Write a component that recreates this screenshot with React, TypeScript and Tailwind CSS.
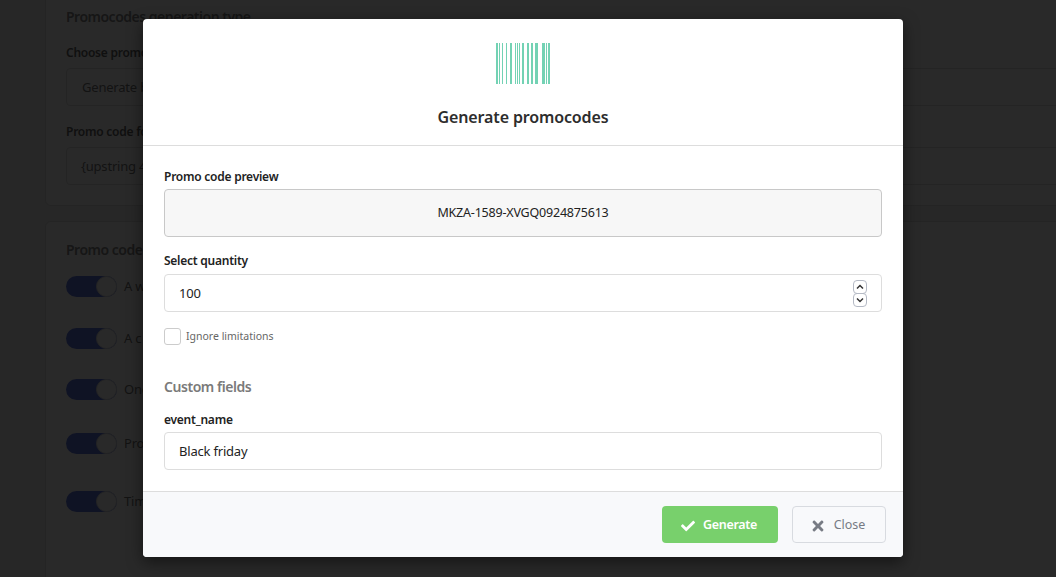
import { FaCheck, FaTimes } from "react-icons/fa";

const font = "font-['Noto_Sans',sans-serif]";

// start and end of each bar in the barcode logo
const bars = [
  [0, 2], [3, 4], [6, 7], [10, 11], [14, 16], [19, 20], [21, 22], [23, 24], [26, 28],
  [31, 33], [35, 37], [39, 42], [46, 49], [50, 51], [52, 54],
];

const toggles = [
  { label: "A w", cls: "mt-[16px]" },
  { label: "A c", cls: "mt-[31px]" },
  { label: "One", cls: "mt-[30px]" },
  { label: "Pro", cls: "mt-[33px]" },
  { label: "Tim", cls: "mt-[37px]" },
];

const labelCls = "block text-[12px] font-semibold leading-[18px] tracking-[-0.25px] text-[#222]";

const Background = () => (
  <div className="flex h-[577px] overflow-hidden bg-[#eeeeee] pl-[45px]">
    <div className="w-[1100px] shrink-0 -mt-[20px]">
      <div className="h-[226px] rounded-md border border-[#dddddd] bg-white px-[20px] pt-[26px]">
        <div className="text-[14px] font-semibold leading-[20px] tracking-[-0.5px] text-[#888]">Promocodes generation type</div>
        <div className="mt-[16px] text-[12px] font-semibold leading-[20px] tracking-[-0.25px] text-[#666]">Choose promo</div>
        <div className="mt-[5px] flex h-[38px] items-center rounded border border-[#dddddd] pl-[15px] pt-[2px] text-[13px] tracking-[-0.2px] text-[#777]">
          Generate b
        </div>
        <div className="mt-[16px] text-[12px] font-semibold leading-[20px] tracking-[-0.25px] text-[#666]">Promo code fo</div>
        <div className="mt-[5px] flex h-[38px] items-center rounded border border-[#dddddd] pl-[14px] pt-[2px] text-[13px] tracking-[-0.2px] text-[#777]">
          {"{upstring 4"}
        </div>
      </div>
      <div className="mt-[15px] h-[400px] rounded-md border border-[#dddddd] bg-white px-[20px] pt-[18px]">
        <div className="text-[14px] font-semibold leading-[20px] tracking-[-0.5px] text-[#888]">Promo code</div>
        {toggles.map((t) => (
          <div key={t.label} className={`${t.cls} flex h-[21px] items-center gap-[7px]`}>
            <div className="relative h-[21px] w-[51px] rounded-full bg-[#5f78dc]">
              <div className="absolute right-0 top-0 h-[21px] w-[21px] rounded-full border border-[#dddddd] bg-white" />
            </div>
            <span className="text-[13px] tracking-[-0.2px] text-[#777]">{t.label}</span>
          </div>
        ))}
      </div>
    </div>
  </div>
);

const App = () => {
  return (
    <div className={`relative h-[577px] w-[1056px] overflow-hidden ${font}`}>
      <Background />

      {/* Modal overlay */}
      <div className="absolute inset-0 flex justify-center bg-black/[.84] pr-[10px] pt-[19px]">
        <div className="flex h-[538px] w-[760px] flex-col overflow-hidden rounded bg-white shadow-[0_5px_15px_rgba(0,0,0,0.5)]">
          <div className="flex h-[127px] shrink-0 flex-col items-center border-b border-[#dddddd] pt-[24px]">
            <svg width="55" height="41" viewBox="0 0 55 41" className="block">
              {bars.map(([a, b]) => (
                <rect key={a} x={a} y={0} width={b - a} height={41} fill="#73d2b4" />
              ))}
            </svg>
            <h2 className="mt-[21px] text-[16px] font-semibold leading-[24px] tracking-[-0.14px] text-[#2d2d2d]">Generate promocodes</h2>
          </div>

          <div className="flex-1 px-[21px] pt-[22px]">
            <label className={labelCls}>Promo code preview</label>
            <div className="mt-[3px] flex h-[48px] items-center justify-center rounded border border-[#c8c8c8] bg-[#f7f7f7] text-[12.5px] tracking-[-0.2px] text-[#222]">
              MKZA-1589-XVGQ0924875613
            </div>

            <label className={`mt-[15px] ${labelCls}`}>Select quantity</label>
            <div className="mt-[4px] flex h-[38px] items-center justify-between rounded border border-[#dddddd] pl-[14px] pr-[14px] text-[13px] tracking-[-0.2px] text-[#222]">
              <span className="pt-[2px]">100</span>
              <div className="flex flex-col">
                <div className="flex h-[14px] w-[14px] items-center justify-center rounded-[4px] border border-[#b5bac5]">
                  <svg width="8" height="6" viewBox="0 0 8 6"><path d="M1 4.5 4 1.5 7 4.5" fill="none" stroke="#333" strokeWidth="1.5" /></svg>
                </div>
                <div className="-mt-px flex h-[14px] w-[14px] items-center justify-center rounded-[4px] border border-[#b5bac5]">
                  <svg width="8" height="6" viewBox="0 0 8 6"><path d="M1 1.5 4 4.5 7 1.5" fill="none" stroke="#333" strokeWidth="1.5" /></svg>
                </div>
              </div>
            </div>

            <div className="mt-[16px] flex items-start gap-[5px]">
              <div className="h-[17px] w-[17px] rounded-[3px] border border-[#cccccc] bg-white" />
              <span className="text-[10.5px] leading-[16px] text-[#666]">Ignore limitations</span>
            </div>

            <div className="mt-[32px] text-[14px] font-semibold leading-[20px] tracking-[-0.45px] text-[#7a7a7a]">Custom fields</div>
            <label className={`mt-[14px] ${labelCls}`}>event_name</label>
            <div className="mt-[3px] flex h-[38px] items-center rounded border border-[#dddddd] pl-[14px] pt-[2px] text-[13px] tracking-[-0.2px] text-[#222]">
              Black friday
            </div>
          </div>

          <div className="flex h-[66px] shrink-0 items-start justify-end gap-[14px] border-t border-[#dddddd] bg-[#f8f9fb] pr-[17px] pt-[14px]">
            <button className="flex h-[37px] w-[116px] items-center justify-center gap-[8px] rounded bg-[#78d06c] pr-[2px] pt-[2px] text-[12.5px] font-semibold tracking-[-0.3px] text-white">
              <FaCheck size={14} />
              Generate
            </button>
            <button className="flex h-[37px] w-[94px] items-center justify-center gap-[8px] rounded border border-[#d8dbe0] pr-[3px] pt-[2px] text-[12.5px] text-[#777b84]">
              <FaTimes size={16} />
              Close
            </button>
          </div>
        </div>
      </div>
    </div>
  );
};

export default App;
